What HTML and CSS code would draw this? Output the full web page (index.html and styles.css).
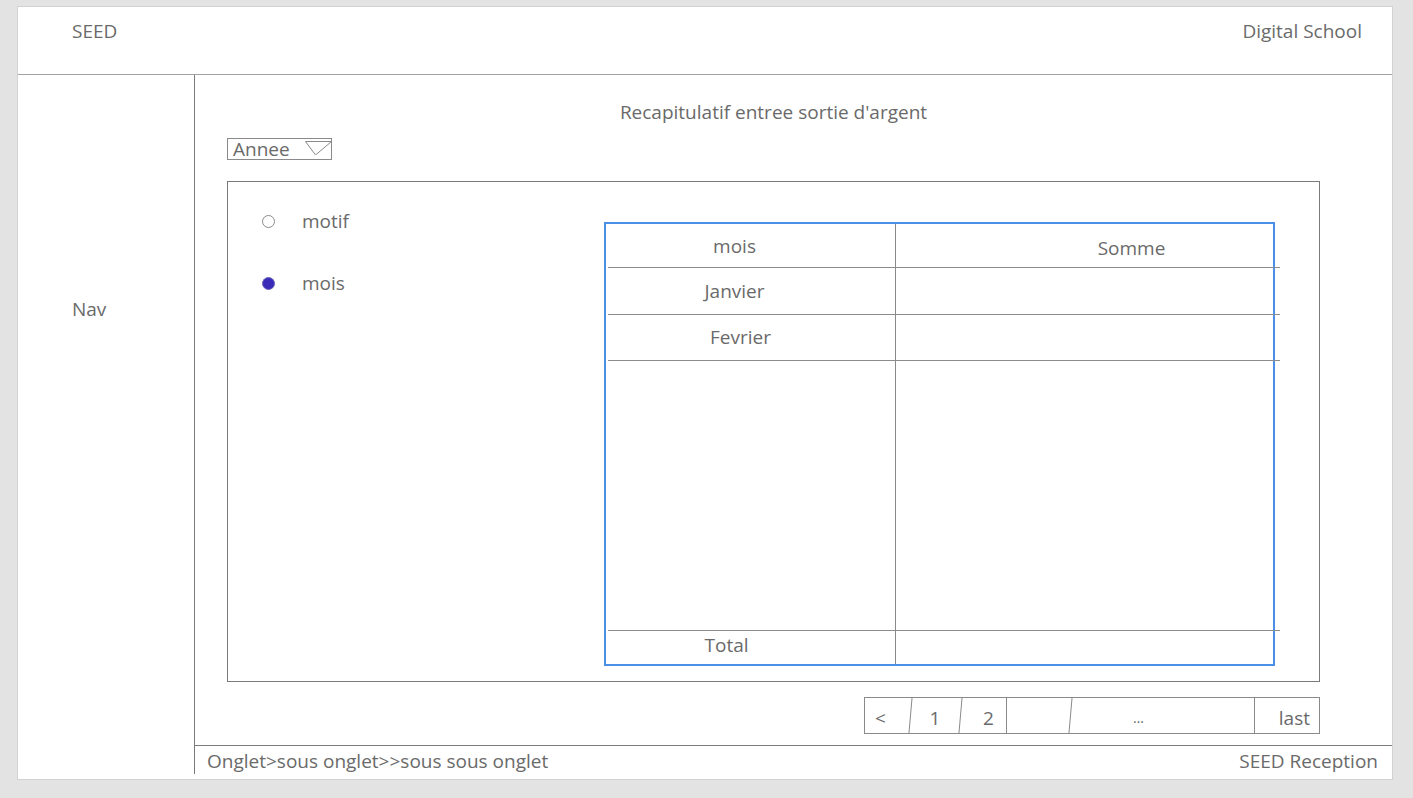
FILE: index.html
```html
<!DOCTYPE html>
<html lang="fr">
<head>
<meta charset="utf-8">
<title>SEED - Recapitulatif</title>
<link rel="stylesheet" href="styles.css">
</head>
<body>
<div class="page">
  <header class="top">
    <span class="brand">SEED</span>
    <span class="school">Digital School</span>
  </header>
  <div class="body">
    <nav class="side"><span>Nav</span></nav>
    <div class="main">
      <div class="content">
        <h1 class="title">Recapitulatif entree sortie d'argent</h1>
        <div class="select">
          <span>Annee</span>
          <svg class="caret" width="27" height="16" viewBox="0 0 27 16"><polyline points="0.5,2.5 26.5,2.5 10.5,16" fill="none" stroke="#8a8a8a" stroke-width="1"/><line x1="0.5" y1="2.5" x2="10.5" y2="16" stroke="#8a8a8a" stroke-width="1"/></svg>
        </div>
        <div class="box">
          <div class="radios">
            <label class="radio"><span class="dot"></span><span>motif</span></label>
            <label class="radio"><span class="dot on"></span><span>mois</span></label>
          </div>
          <div class="tbl">
            <div class="row head"><div class="c1">mois</div><div class="c2 somme">Somme</div></div>
            <div class="row r1"><div class="c1">Janvier</div><div class="c2"></div></div>
            <div class="row r2"><div class="c1 fev">Fevrier</div><div class="c2"></div></div>
            <div class="row fill"><div class="c1"></div><div class="c2"></div></div>
            <div class="row total"><div class="c1 tot">Total</div><div class="c2"></div></div>
          </div>
        </div>
        <div class="pager-wrap">
          <div class="pager">
            <div class="pg p-prev">&lt;</div>
            <div class="pg p-1 slant">1</div>
            <div class="pg p-2 slant">2</div>
            <div class="pg p-e"></div>
            <div class="pg p-dots slant">…</div>
            <div class="pg p-last">last</div>
          </div>
        </div>
      </div>
      <footer class="foot">
        <span>Onglet&gt;sous onglet&gt;&gt;sous sous onglet</span>
        <span>SEED Reception</span>
      </footer>
    </div>
  </div>
</div>
</body>
</html>
```
FILE: styles.css
```css
* { box-sizing: border-box; }
html, body { margin: 0; padding: 0; }
body {
  background: #e3e3e3;
  font-family: "Open Sans", "Noto Sans", "DejaVu Sans", sans-serif;
  font-size: 19px;
  color: #6a6a6a;
  width: 1413px;
  height: 798px;
  overflow: hidden;
}
.page {
  margin: 6px 0 0 17px;
  width: 1376px;
  height: 774px;
  background: #fff;
  border: 1px solid #d2d2d2;
  display: flex;
  flex-direction: column;
}
.top {
  height: 68px;
  flex: none;
  border-bottom: 1px solid #a2a2a2;
  display: flex;
  justify-content: space-between;
  align-items: flex-start;
  padding: 11px 30px 0 54px;
  line-height: 26px;
}
.body {
  flex: 1;
  display: flex;
  min-height: 0;
}
.side {
  width: 177px;
  flex: none;
  border-right: 1px solid #7a7a7a;
  margin-bottom: 5px;
  padding: 221px 0 0 54px;
  line-height: 26px;
}
.main {
  flex: 1;
  display: flex;
  flex-direction: column;
}
.content {
  padding-left: 32px;
  width: 1125px;
}
.title {
  margin: 24px 0 0;
  font-weight: normal;
  font-size: 19px;
  line-height: 26px;
  text-align: center;
  color: #6a6a6a;
}
.select {
  margin-top: 13px;
  width: 105px;
  height: 22px;
  border: 1px solid #8a8a8a;
  display: flex;
  align-items: center;
  justify-content: space-between;
  padding-left: 5px;
  line-height: 20px;
}
.caret { align-self: flex-start; margin-right: -1px; }
.box {
  margin-top: 21px;
  width: 1093px;
  height: 501px;
  border: 1px solid #7a7a7a;
  display: flex;
}
.radios {
  width: 376px;
  flex: none;
  padding: 26px 0 0 34px;
  display: flex;
  flex-direction: column;
  gap: 36px;
}
.radio {
  display: flex;
  align-items: center;
  line-height: 26px;
}
.dot {
  width: 13px;
  height: 13px;
  border-radius: 50%;
  border: 1px solid #8a8a8a;
  margin-right: 27px;
  background: #fff;
}
.dot.on {
  background: #3a2cb8;
  border-color: #6a64b8;
}
.tbl {
  margin-top: 40px;
  width: 671px;
  height: 444px;
  border: 2px solid #4a90e6;
  display: flex;
  flex-direction: column;
}
.row {
  display: flex;
  position: relative;
}
.row::after {
  content: "";
  position: absolute;
  left: 2px;
  right: -7px;
  bottom: -1px;
  border-bottom: 1px solid #8c8c8c;
}
.row.total::after { display: none; }
.row.head { height: 43px; }
.row.r1 { height: 47px; }
.row.r2 { height: 46px; }
.row.fill { flex: 1; }
.row.total { height: 34px; }
.c1 {
  width: 290px;
  flex: none;
  border-right: 1px solid #8a8a8a;
  display: flex;
  align-items: center;
  justify-content: center;
  padding-right: 32px;
  line-height: 26px;
}
.c1.fev { padding-right: 20px; }
.c1.tot { padding-right: 48px; padding-bottom: 4px; }
.c2 {
  flex: 1;
  display: flex;
  align-items: center;
  justify-content: center;
  padding-left: 94px;
  line-height: 26px;
}
.c2.somme { padding-top: 4px; }
.pager-wrap {
  width: 1093px;
  display: flex;
  justify-content: flex-end;
  margin-top: 15px;
}
.pager {
  width: 456px;
  height: 37px;
  border: 1px solid #8a8a8a;
  display: flex;
}
.pg {
  height: 100%;
  display: flex;
  align-items: center;
  justify-content: center;
  line-height: 26px;
  padding-top: 4px;
  position: relative;
}
.pg + .pg { border-left: 1px solid #8a8a8a; }
.pg.slant { border-left: none; }
.pg.slant::before {
  content: "";
  position: absolute;
  left: -1px;
  top: 0;
  bottom: 0;
  border-left: 1px solid #8a8a8a;
  transform: skewX(-5deg);
}
.p-prev { width: 46px; justify-content: flex-start; padding-left: 10px; }
.p-1 { width: 50px; padding-right: 2px; }
.p-2 { width: 45px; padding-left: 10px; }
.p-e { width: 65px; }
.p-dots { width: 183px; padding-right: 48px; font-size: 14px; }
.p-last { flex: 1; justify-content: flex-end; padding-right: 9px; }
.foot {
  margin-top: auto;
  height: 34px;
  border-top: 1px solid #7a7a7a;
  display: flex;
  justify-content: space-between;
  padding: 2px 14px 0 12px;
  line-height: 26px;
}
```
